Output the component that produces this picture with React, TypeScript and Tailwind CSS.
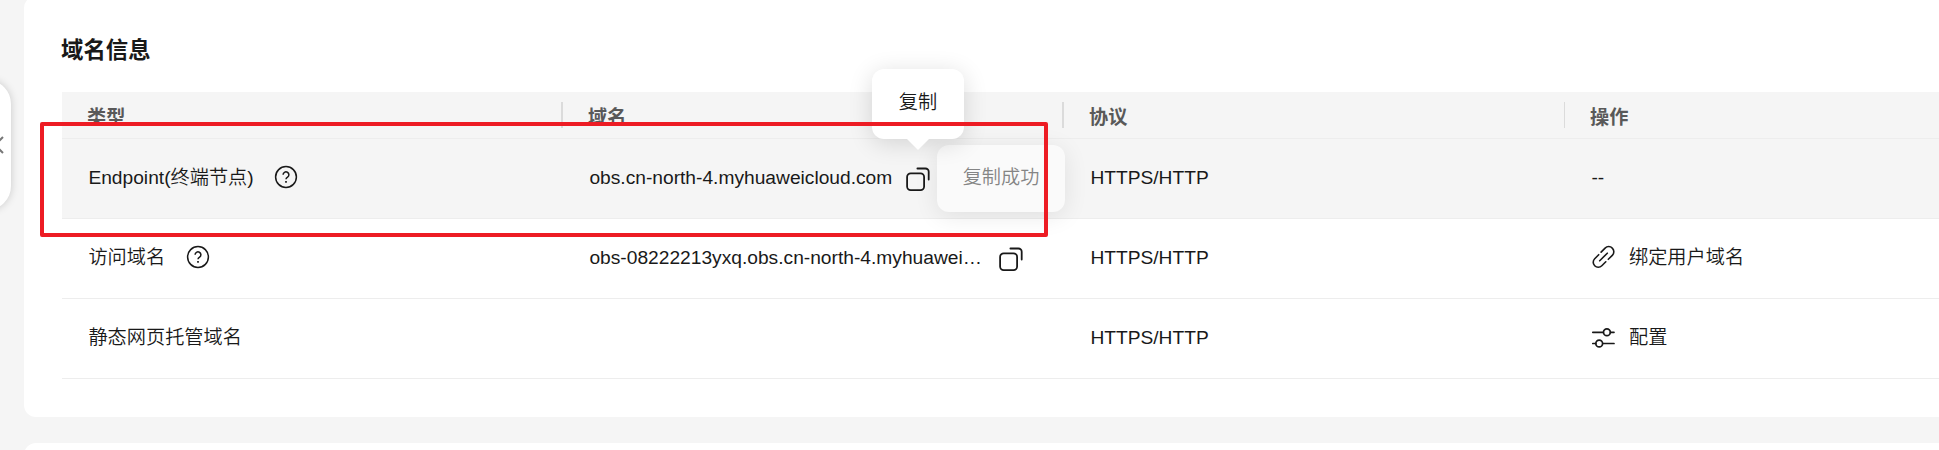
import type { ReactNode } from "react";

const HelpIcon = () => (
  <svg className="size-6 shrink-0" viewBox="0 0 24 24" fill="none" stroke="#191919" strokeWidth="1.5">
    <circle cx="12" cy="12" r="10.4" />
    <path d="M9.1 9.8a2.9 2.9 0 1 1 4.5 2.4c-1 .65-1.6 1.1-1.6 2.1" />
    <path d="M12 16v1.8" strokeWidth="1.7" />
  </svg>
);

const CopyIcon = () => (
  <svg className="size-6 shrink-0" viewBox="0 0 24 24" fill="none" stroke="#191919" strokeWidth="1.8" strokeLinecap="round">
    <rect x="1.1" y="6.3" width="17" height="16.8" rx="3.6" />
    <path d="M11.4 1.5h8a3.3 3.3 0 0 1 3.3 3.3v7.8" />
  </svg>
);

const LinkIcon = () => (
  <svg className="size-6 shrink-0" viewBox="0 0 24 24" fill="none" stroke="#191919" strokeWidth="1.6" strokeLinecap="round">
    <path d="M8.7 15.8l7.6-7.6" />
    <path d="M10.1 7.1l4-4a5 5 0 0 1 7.2 0 5 5 0 0 1 0 7.2l-4 4" />
    <path d="M14.8 16.8l-4 4a5 5 0 0 1-7.1 0 5 5 0 0 1 0-7.1l4-4" />
  </svg>
);

const ConfigIcon = () => (
  <svg className="size-6 shrink-0" viewBox="0 0 24 24" fill="none" stroke="#191919" strokeWidth="1.7" strokeLinecap="round">
    <path d="M1.8 6.3h10.5M19.5 6.3h3.5M1.8 17.5h3M11.9 17.5h11.1" />
    <circle cx="15.9" cy="6.3" r="3.4" />
    <circle cx="8.2" cy="17.5" r="3.4" />
  </svg>
);

function HeaderCell({ children, divider = "" }: { children: ReactNode; divider?: string }) {
  return (
    <div className="flex w-[501px] shrink-0 items-center justify-between pl-[25px]">
      <span className="pt-[5px] leading-none">{children}</span>
      <span className={`h-[26px] bg-[#dbdbdb] ${divider}`} />
    </div>
  );
}

function Cell({ children }: { children?: ReactNode }) {
  return <div className="flex w-[501px] shrink-0 items-center pl-[26.4px] whitespace-nowrap">{children}</div>;
}

function Row({ children, active = false }: { children: ReactNode; active?: boolean }) {
  return (
    <div className={`flex h-20 border-b border-[#ededed] ${active ? "bg-[#f5f5f5]" : "bg-white"}`}>{children}</div>
  );
}

export default function App() {
  return (
    <div className="relative h-[450px] w-full overflow-hidden bg-[#f5f5f5] pl-6 font-['Liberation_Sans','Noto_Sans_CJK_SC',sans-serif] text-[19.2px] font-[350] text-[#191919]">
      <main className="-mt-1 h-[421px] rounded-l-xl bg-white pl-[38px]">
        <h2 className="-ml-px flex h-24 items-center pt-[14px] text-[22.4px] leading-none font-bold">域名信息</h2>
        <div className="flex h-[47px] border-b border-[#ededed] bg-[#f5f5f5] font-bold text-[#595959]">
          <HeaderCell divider="w-[2px]">类型</HeaderCell>
          <HeaderCell divider="w-[2px]">域名</HeaderCell>
          <HeaderCell divider="w-px">协议</HeaderCell>
          <HeaderCell>操作</HeaderCell>
        </div>
        <Row active>
          <Cell>
            <span>Endpoint(终端节点)</span>
            <span className="mb-[3px] ml-[20.6px]"><HelpIcon /></span>
          </Cell>
          <Cell>
            <span>obs.cn-north-4.myhuaweicloud.com</span>
            <span className="mt-px ml-[14px]"><CopyIcon /></span>
          </Cell>
          <Cell>HTTPS/HTTP</Cell>
          <Cell>--</Cell>
        </Row>
        <Row>
          <Cell>
            <span>访问域名</span>
            <span className="mb-[3px] ml-[20.6px]"><HelpIcon /></span>
          </Cell>
          <Cell>
            <span className="w-[393px]">obs-08222213yxq.obs.cn-north-4.myhuawei…</span>
            <span className="mt-px ml-[17px]"><CopyIcon /></span>
          </Cell>
          <Cell>HTTPS/HTTP</Cell>
          <Cell>
            <span className="mb-[3px]"><LinkIcon /></span>
            <span className="ml-[13.6px]">绑定用户域名</span>
          </Cell>
        </Row>
        <Row>
          <Cell>静态网页托管域名</Cell>
          <Cell />
          <Cell>HTTPS/HTTP</Cell>
          <Cell>
            <span className="mb-[2px]"><ConfigIcon /></span>
            <span className="ml-[13.6px]">配置</span>
          </Cell>
        </Row>
      </main>
      <section className="mt-[26px] h-10 rounded-l-xl bg-white" />

      <div className="absolute top-[80px] -left-10 flex h-[130px] w-[51px] items-center rounded-[24px] bg-white pl-[35px] shadow-[0_0_8px_rgba(0,0,0,0.18)]">
        <svg className="h-5 w-3" viewBox="0 0 12 20" fill="none" stroke="#777" strokeWidth="2">
          <path d="M8 2L0 10l8 8" />
        </svg>
      </div>

      <div className="absolute top-[145px] left-[937px] flex h-[67px] w-32 items-center justify-center rounded-xl bg-[#fafafa] pb-px text-[#858585] shadow-[0_4px_24px_rgba(0,0,0,0.09)]">
        复制成功
      </div>
      <div className="absolute top-[69px] left-[872px] flex h-[70px] w-[92px] items-center justify-center rounded-xl bg-white pb-px shadow-[0_4px_24px_rgba(0,0,0,0.14)]">
        复制
        <svg className="absolute top-[69px] left-[34px] h-3 w-6" viewBox="0 0 24 12" fill="white">
          <path d="M0 0h24L12 12z" />
        </svg>
      </div>
      <div className="absolute top-[122px] left-[40px] h-[115px] w-[1008px] rounded-[2px] border-4 border-[#ed1c24]" />
    </div>
  );
}
